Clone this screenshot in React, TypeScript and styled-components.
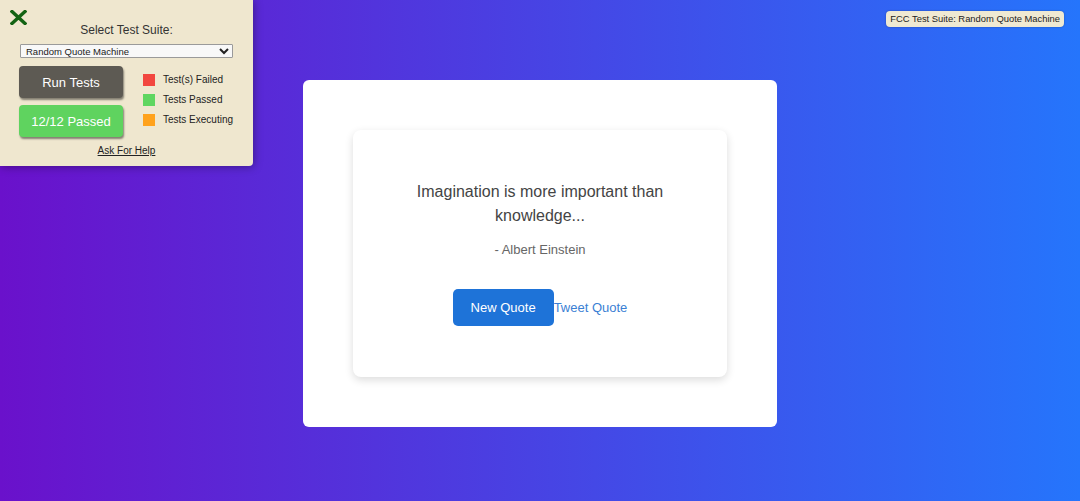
import * as React from 'react'
import styled, { createGlobalStyle } from 'styled-components'

const GlobalStyle = createGlobalStyle`
  html, body {
    margin: 0;
    padding: 0;
    height: 100%;
  }
  body {
    font-family: "Liberation Sans", Arial, sans-serif;
  }
  #root {
    height: 100%;
  }
`

const legend = [
  { label: 'Test(s) Failed', color: '#f2473f' },
  { label: 'Tests Passed', color: '#5fd660' },
  { label: 'Tests Executing', color: '#ffa21c' },
]

const App: React.FC = () => {
  return (
    <Page>
      <GlobalStyle />
      <Machine>
        <QuoteBox>
          <QuoteText>Imagination is more important than knowledge...</QuoteText>
          <Author>- Albert Einstein</Author>
          <Actions>
            <NewQuote>New Quote</NewQuote>
            <Tweet href="#">Tweet Quote</Tweet>
          </Actions>
        </QuoteBox>
      </Machine>

      <TestPanel>
        <Close aria-label="close">
          <svg width="17" height="15" viewBox="0 0 17 15">
            <path d="M2 1.5 L15 13.5 M15 1.5 L2 13.5" stroke="#136313" strokeWidth="3.4" strokeLinecap="square" />
          </svg>
        </Close>
        <SuiteLabel>Select Test Suite:</SuiteLabel>
        <SuiteSelect defaultValue="quote">
          <option value="quote">Random Quote Machine</option>
        </SuiteSelect>
        <PanelBody>
          <ButtonColumn>
            <PanelButton $bg="#5d5a53">Run Tests</PanelButton>
            <PanelButton $bg="#5fd35f">12/12 Passed</PanelButton>
          </ButtonColumn>
          <Legend>
            {legend.map((item) => (
              <LegendRow key={item.label}>
                <Swatch $color={item.color} />
                {item.label}
              </LegendRow>
            ))}
          </Legend>
        </PanelBody>
        <HelpLink href="#">Ask For Help</HelpLink>
      </TestPanel>

      <SuiteBadge>FCC Test Suite: Random Quote Machine</SuiteBadge>
    </Page>
  )
}

export default App

// Styles
const Page = styled.div`
  position: relative;
  height: 501px;
  display: flex;
  align-items: center;
  justify-content: center;
  background: linear-gradient(to right, #6a11cb, #2575fc);
  overflow: hidden;
`

const Machine = styled.div`
  width: 474px;
  box-sizing: border-box;
  padding: 50px;
  margin-top: 6px;
  background: #fff;
  border-radius: 6px;
`

const QuoteBox = styled.div`
  box-sizing: border-box;
  padding: 50px;
  height: 247px;
  border-radius: 8px;
  background: #fff;
  box-shadow: 0 3px 8px rgba(0, 0, 0, 0.14);
  text-align: center;
`

const QuoteText = styled.p`
  margin: 0;
  font-size: 16px;
  line-height: 24px;
  color: #444;
`

const Author = styled.p`
  margin: 14px 0 0;
  font-size: 13px;
  line-height: 16px;
  color: #666;
`

const Actions = styled.div`
  margin-top: 31px;
  display: flex;
  justify-content: center;
  align-items: center;
`

const NewQuote = styled.button`
  width: 101px;
  height: 37px;
  border: none;
  border-radius: 5px;
  background: #1e73d8;
  color: #fff;
  font-family: inherit;
  font-size: 13px;
`

const Tweet = styled.a`
  color: #3b7fd4;
  font-size: 13px;
  text-decoration: none;
`

const TestPanel = styled.div`
  position: absolute;
  top: 0;
  left: 0;
  width: 253px;
  height: 166px;
  box-sizing: border-box;
  padding: 23px 20px 0;
  background: #efe7cf;
  border-bottom-right-radius: 4px;
  box-shadow: 1px 1px 8px rgba(0, 0, 0, 0.35);
  display: flex;
  flex-direction: column;
  align-items: center;
  color: #222;
`

const Close = styled.span`
  position: absolute;
  top: 10px;
  left: 10px;
  line-height: 0;
`

const SuiteLabel = styled.div`
  font-size: 12px;
  line-height: 15px;
  color: #333;
`

const SuiteSelect = styled.select`
  margin-top: 6px;
  width: 213px;
  height: 14px;
  padding: 0 1px;
  font-family: inherit;
  font-size: 9.5px;
  color: #222;
  background: #f8f8f8;
  border: 1px solid #9a9a9a;
  border-radius: 1px;
`

const PanelBody = styled.div`
  align-self: stretch;
  margin-top: 8px;
  display: flex;
  gap: 20px;
`

const ButtonColumn = styled.div`
  display: flex;
  flex-direction: column;
  gap: 7px;
  margin-left: -1px;
`

const PanelButton = styled.button<{ $bg: string }>`
  width: 104px;
  height: 32px;
  border: none;
  border-radius: 4px;
  background: ${(p) => p.$bg};
  color: #fff;
  font-family: inherit;
  font-size: 13px;
  box-shadow: 1px 2px 2px rgba(0, 0, 0, 0.45);
`

const Legend = styled.div`
  padding-top: 8px;
  display: flex;
  flex-direction: column;
  gap: 8px;
`

const LegendRow = styled.div`
  display: flex;
  align-items: center;
  gap: 8px;
  font-size: 10px;
  line-height: 12px;
  white-space: nowrap;
  color: #222;
`

const Swatch = styled.span<{ $color: string }>`
  flex: none;
  width: 12px;
  height: 12px;
  background: ${(p) => p.$color};
`

const HelpLink = styled.a`
  margin-top: 8px;
  font-size: 10px;
  color: #222;
  text-decoration: underline;
`

const SuiteBadge = styled.div`
  position: absolute;
  top: 11px;
  right: 16px;
  padding: 2px 4px;
  background: #efe9d2;
  border-radius: 4px;
  font-size: 9.4px;
  line-height: 12px;
  color: #222;
  box-shadow: 0 0 2px rgba(0, 0, 0, 0.3);
`
